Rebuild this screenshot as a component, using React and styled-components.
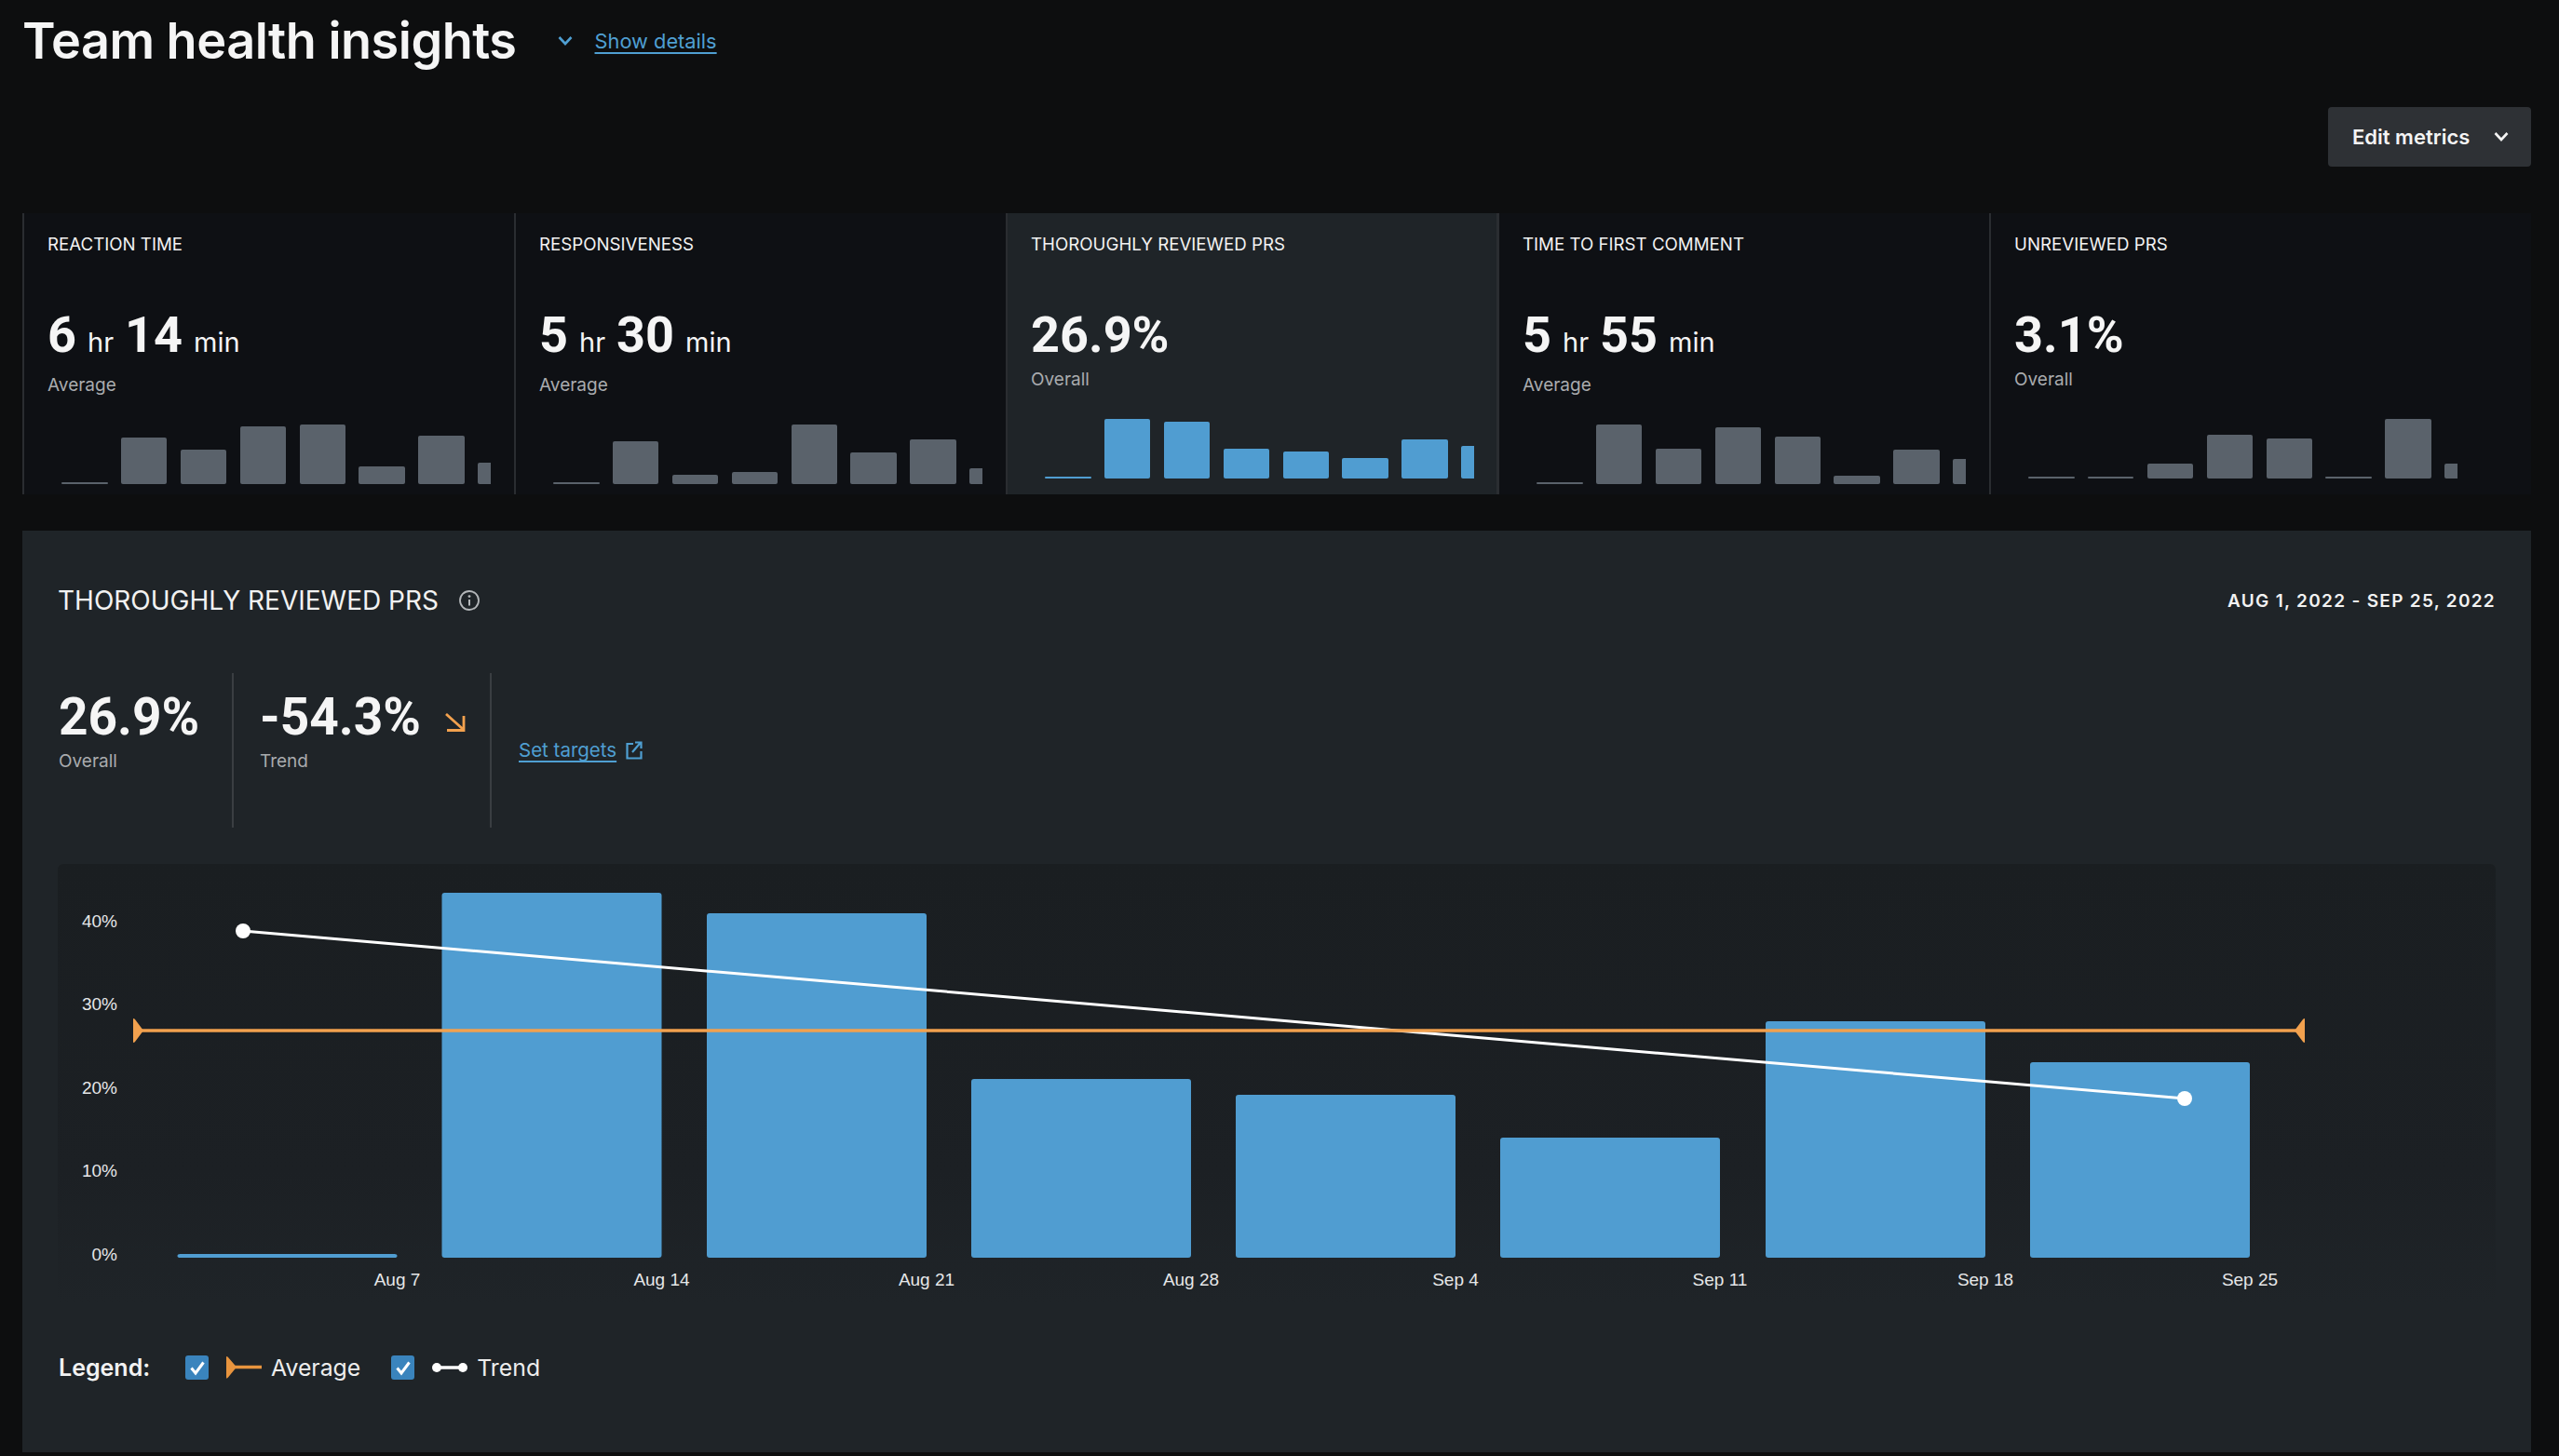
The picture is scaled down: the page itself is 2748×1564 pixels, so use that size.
import React from "react";
import styled, { createGlobalStyle } from "styled-components";

const metrics = [
  { title: "REACTION TIME", parts: ["6", "hr", "14", "min"], label: "Average", bars: [2, 50, 37, 62, 64, 19, 52, 23] },
  { title: "RESPONSIVENESS", parts: ["5", "hr", "30", "min"], label: "Average", bars: [2, 46, 10, 13, 64, 34, 48, 17] },
  { title: "THOROUGHLY REVIEWED PRS", parts: ["26.9%"], label: "Overall", bars: [2, 64, 61, 32, 29, 22, 42, 35], active: true },
  { title: "TIME TO FIRST COMMENT", parts: ["5", "hr", "55", "min"], label: "Average", bars: [2, 64, 38, 61, 51, 9, 37, 27] },
  { title: "UNREVIEWED PRS", parts: ["3.1%"], label: "Overall", bars: [2, 2, 16, 47, 43, 2, 64, 16] },
];

const chartBars = [
  { x: 190.5, top: 1347, date: "Aug 7" },
  { x: 474.5, top: 959, date: "Aug 14" },
  { x: 759, top: 981, date: "Aug 21" },
  { x: 1043, top: 1159, date: "Aug 28" },
  { x: 1327, top: 1176, date: "Sep 4" },
  { x: 1611, top: 1222, date: "Sep 11" },
  { x: 1896, top: 1097, date: "Sep 18" },
  { x: 2180, top: 1141, date: "Sep 25" },
];

const yTicks = [
  { label: "40%", y: 990 },
  { label: "30%", y: 1079 },
  { label: "20%", y: 1169 },
  { label: "10%", y: 1258 },
  { label: "0%", y: 1348 },
];

const Chevron = ({ color }) => (
  <svg width="16" height="16" viewBox="0 0 16 16" fill="none">
    <path d="M1.5 4 L8 11 L14.5 4" stroke={color} strokeWidth="2.6" />
  </svg>
);

const InfoIcon = () => (
  <svg width="22" height="22" viewBox="0 0 22 22" fill="none">
    <circle cx="11" cy="11" r="10" stroke="#b4b7ba" strokeWidth="1.8" />
    <path d="M11 10 V16.5" stroke="#b4b7ba" strokeWidth="2" />
    <circle cx="11" cy="6.6" r="1.4" fill="#b4b7ba" />
  </svg>
);

const TrendArrow = () => (
  <svg width="22" height="20" viewBox="0 0 22 20" fill="none">
    <path d="M1 1 L20 18 M20 3 V18.5 H2" stroke="#f2a14e" strokeWidth="2.8" />
  </svg>
);

const ExternalIcon = () => (
  <svg width="18" height="20" viewBox="0 0 18 20" fill="none">
    <path d="M8 3 H1.5 V18.5 H16.5 V11 M7 12 L16 1.5 M10 1.5 H16.5 V8" stroke="#4f9fd2" strokeWidth="2.2" />
  </svg>
);

const CheckMark = () => (
  <svg width="18" height="18" viewBox="0 0 18 18" fill="none">
    <path d="M2.5 9.5 L7 15 L15.5 3.5" stroke="#fff" strokeWidth="3" />
  </svg>
);

const MainChart = () => (
  <ChartSvg viewBox="62 928 2618 472">
    {yTicks.map((t) => (
      <text key={t.label} x="126" y={t.y + 6} textAnchor="end" fill="#e6e7e8" fontSize="19" fontFamily="'Liberation Sans', sans-serif">
        {t.label}
      </text>
    ))}
    {chartBars.map((b) => (
      <g key={b.date}>
        <rect x={b.x} y={b.top} width="236" height={1351 - b.top} rx="3" fill="#509dd1" />
        <text x={b.x + 236} y="1381" textAnchor="middle" fill="#e6e7e8" fontSize="19" fontFamily="'Liberation Sans', sans-serif">
          {b.date}
        </text>
      </g>
    ))}
    <line x1="261" y1="1000" x2="2346" y2="1180" stroke="#fff" strokeWidth="3" />
    <circle cx="261" cy="1000" r="8" fill="#fff" />
    <circle cx="2346" cy="1180" r="8" fill="#fff" />
    <line x1="146" y1="1107" x2="2470" y2="1107" stroke="#f2a14e" strokeWidth="3.5" />
    <path d="M143 1095 Q143 1093 145 1095 L154 1107 L145 1119 Q143 1121 143 1119 Z" fill="#f2a14e" />
    <path d="M2475 1095 Q2475 1093 2473 1095 L2464 1107 L2473 1119 Q2475 1121 2475 1119 Z" fill="#f2a14e" />
  </ChartSvg>
);

const MetricCard = ({ title, parts, label, bars, active }) => {
  const isPercent = parts.length === 1;
  return (
    <Card $active={active}>
      <CardTitle>{title}</CardTitle>
      <ValueRow>
        {parts.map((part, i) =>
          i % 2 === 0 ? <BigValue key={i}>{part}</BigValue> : <Unit key={i}>{part}</Unit>
        )}
      </ValueRow>
      <CardLabel $percent={isPercent}>{label}</CardLabel>
      <MiniChart>
        {bars.map((h, i) => (
          <MiniBar key={i} $height={h} $active={active} />
        ))}
      </MiniChart>
    </Card>
  );
};

export default function App() {
  return (
    <Page>
      <GlobalStyle />
      <TitleRow>
        <PageTitle>Team health insights</PageTitle>
        <Chevron color="#4f9fd2" />
        <DetailsLink>Show details</DetailsLink>
      </TitleRow>
      <ActionRow>
        <EditButton>
          Edit metrics
          <Chevron color="#f4f4f4" />
        </EditButton>
      </ActionRow>
      <CardGrid>
        {metrics.map((m) => (
          <MetricCard key={m.title} {...m} />
        ))}
      </CardGrid>
      <Panel>
        <PanelHead>
          <PanelTitle>
            THOROUGHLY REVIEWED PRS
            <InfoIcon />
          </PanelTitle>
          <DateRange>AUG 1, 2022 - SEP 25, 2022</DateRange>
        </PanelHead>
        <StatRow>
          <Stat>
            <StatValue>26.9%</StatValue>
            <StatLabel>Overall</StatLabel>
          </Stat>
          <Stat $second>
            <StatValue>
              -54.3%
              <TrendArrow />
            </StatValue>
            <StatLabel>Trend</StatLabel>
          </Stat>
          <TargetsLink>
            <LinkText>Set targets</LinkText>
            <ExternalIcon />
          </TargetsLink>
        </StatRow>
        <ChartBox>
          <MainChart />
        </ChartBox>
        <Legend>
          <LegendTitle>Legend:</LegendTitle>
          <CheckBox>
            <CheckMark />
          </CheckBox>
          <svg width="38" height="26" viewBox="0 0 38 26" fill="none">
            <path d="M8 12.5 H38" stroke="#e8943e" strokeWidth="3.5" />
            <path d="M0 2 Q0 0 2 2 L11 12.5 L2 23.5 Q0 26 0 23 Z" fill="#e8943e" />
          </svg>
          <LegendText>Average</LegendText>
          <CheckBox $gap>
            <CheckMark />
          </CheckBox>
          <svg width="38" height="14" viewBox="0 0 38 14" fill="none">
            <path d="M5 7 H33" stroke="#fff" strokeWidth="3.5" />
            <circle cx="5" cy="7" r="5" fill="#fff" />
            <circle cx="33" cy="7" r="5" fill="#fff" />
          </svg>
          <LegendText>Trend</LegendText>
        </Legend>
      </Panel>
    </Page>
  );
}

const GlobalStyle = createGlobalStyle`
  html, body {
    margin: 0;
    background: #0d0e0f;
  }
  * {
    box-sizing: border-box;
  }
`;

const Page = styled.div`
  width: 2748px;
  height: 1564px;
  overflow: hidden;
  padding: 14px 30px 0 24px;
  color: #f4f4f4;
  font-family: Inter, "Noto Sans", sans-serif;
`;

const TitleRow = styled.div`
  display: flex;
  align-items: center;
  height: 60px;
  gap: 24px;
`;

const PageTitle = styled.h1`
  margin: 0 20px 0 0;
  font-size: 54px;
  line-height: 60px;
  font-weight: 600;
  letter-spacing: -0.5px;
  color: #f5f5f5;
`;

const DetailsLink = styled.a`
  font-size: 21.8px;
  color: #4f9fd2;
  text-decoration: underline;
  text-underline-offset: 4px;
`;

const ActionRow = styled.div`
  display: flex;
  justify-content: flex-end;
  margin-top: 41px;
`;

const EditButton = styled.button`
  display: flex;
  align-items: center;
  justify-content: space-between;
  width: 218px;
  height: 64px;
  padding: 0 24px 0 26px;
  border: none;
  border-radius: 4px;
  background: #2e3135;
  color: #f4f4f4;
  font: 600 22px Inter, sans-serif;
`;

const CardGrid = styled.div`
  display: grid;
  grid-template-columns: repeat(4, 528px) 1fr;
  margin-top: 50px;
  background: #0e1014;
`;

const Card = styled.section`
  height: 302px;
  padding: 20px 0 0 25px;
  border-left: 2px solid #2a2d31;
  background: ${(p) => (p.$active ? "#1f2428" : "transparent")};
  border-right: ${(p) => (p.$active ? "1px solid #2a2d31" : "none")};
`;

const CardTitle = styled.div`
  font-size: 18.7px;
  line-height: 28px;
  font-weight: 400;
  color: #f2f2f2;
`;

const ValueRow = styled.div`
  display: flex;
  align-items: baseline;
  height: 60px;
  margin-top: 53px;
`;

const BigValue = styled.span`
  font-family: Roboto, Inter, sans-serif;
  font-size: 54px;
  line-height: 60px;
  font-weight: 700;
  color: #f5f5f5;
`;

const Unit = styled.span`
  margin: 0 12px;
  font-size: 29px;
  font-weight: 400;
`;

const CardLabel = styled.div`
  margin-top: ${(p) => (p.$percent ? "6px" : "12px")};
  font-size: 19px;
  line-height: 24px;
  color: #a9abae;
`;

const MiniChart = styled.div`
  display: flex;
  align-items: flex-end;
  gap: 14.4px;
  width: 461px;
  height: 64px;
  margin: 30px 0 0 15px;
  overflow: hidden;
`;

const MiniBar = styled.div`
  flex: none;
  width: 49.5px;
  height: ${(p) => p.$height}px;
  border-radius: 2px;
  background: ${(p) => (p.$active ? "#509dd1" : "#5a626b")};
`;

const Panel = styled.section`
  height: 990px;
  margin-top: 39px;
  padding: 59px 38px 0;
  background: #1f2428;
`;

const PanelHead = styled.div`
  display: flex;
  align-items: center;
  justify-content: space-between;
  height: 32px;
`;

const PanelTitle = styled.h2`
  display: flex;
  align-items: center;
  gap: 22px;
  margin: 0;
  font-size: 28px;
  line-height: 32px;
  font-weight: 400;
  color: #f2f2f2;
`;

const DateRange = styled.div`
  font-size: 19px;
  font-weight: 600;
  letter-spacing: 1.3px;
  color: #f2f2f2;
`;

const StatRow = styled.div`
  display: flex;
  align-items: flex-start;
  height: 166px;
  margin-top: 62px;
`;

const Stat = styled.div`
  width: ${(p) => (p.$second ? "277px" : "189px")};
  height: 100%;
  padding: 17px 0 0 ${(p) => (p.$second ? "28px" : "1px")};
  border-right: 2px solid #3a3e42;
`;

const StatValue = styled.div`
  display: flex;
  align-items: center;
  gap: 26px;
  font-family: Roboto, Inter, sans-serif;
  font-size: 55px;
  line-height: 60px;
  font-weight: 700;
  color: #f5f5f5;
  svg {
    margin-top: 12px;
  }
`;

const StatLabel = styled.div`
  margin-top: 6px;
  font-size: 19px;
  line-height: 24px;
  color: #a9abae;
`;

const TargetsLink = styled.a`
  display: flex;
  align-items: center;
  gap: 10px;
  margin: 69px 0 0 29px;
`;

const LinkText = styled.span`
  font-size: 20.5px;
  line-height: 28px;
  color: #4f9fd2;
  text-decoration: underline;
  text-underline-offset: 4px;
`;

const ChartBox = styled.div`
  height: 472px;
  margin-top: 39px;
  border-radius: 6px;
  background: linear-gradient(180deg, #1a1e21 0%, #1c2024 70%, #1f2428 100%);
`;

const ChartSvg = styled.svg`
  display: block;
  width: 2618px;
  height: 472px;
`;

const Legend = styled.div`
  display: flex;
  align-items: center;
  height: 30px;
  margin-top: 54px;
  padding-left: 1px;
`;

const LegendTitle = styled.span`
  width: 136px;
  font-size: 25px;
  font-weight: 600;
  color: #f2f2f2;
`;

const CheckBox = styled.span`
  display: flex;
  align-items: center;
  justify-content: center;
  width: 25px;
  height: 26px;
  margin: 0 19px 0 ${(p) => (p.$gap ? "33px" : "0")};
  border-radius: 3px;
  background: #3a84bd;
`;

const LegendText = styled.span`
  margin-left: 10px;
  font-size: 24.8px;
  font-weight: 400;
  color: #ededed;
`;
